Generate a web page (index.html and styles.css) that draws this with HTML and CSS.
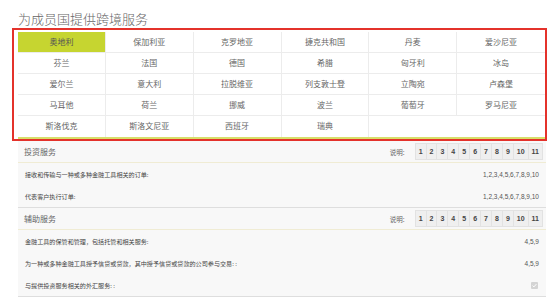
FILE: index.html
```html
<!DOCTYPE html>
<html lang="zh">
<head>
<meta charset="utf-8">
<link rel="stylesheet" href="styles.css">
</head>
<body>
<div class="page">
  <h1 class="title">为成员国提供跨境服务</h1>
  <div class="highlight">
    <div class="grid">
      <div class="cell active">奥地利</div>
      <div class="cell">保加利亚</div>
      <div class="cell">克罗地亚</div>
      <div class="cell">捷克共和国</div>
      <div class="cell">丹麦</div>
      <div class="cell">爱沙尼亚</div>
      <div class="cell">芬兰</div>
      <div class="cell">法国</div>
      <div class="cell">德国</div>
      <div class="cell">希腊</div>
      <div class="cell">匈牙利</div>
      <div class="cell">冰岛</div>
      <div class="cell">爱尔兰</div>
      <div class="cell">意大利</div>
      <div class="cell">拉脱维亚</div>
      <div class="cell">列支敦士登</div>
      <div class="cell">立陶宛</div>
      <div class="cell">卢森堡</div>
      <div class="cell">马耳他</div>
      <div class="cell">荷兰</div>
      <div class="cell">挪威</div>
      <div class="cell">波兰</div>
      <div class="cell">葡萄牙</div>
      <div class="cell">罗马尼亚</div>
      <div class="cell">斯洛伐克</div>
      <div class="cell">斯洛文尼亚</div>
      <div class="cell">西班牙</div>
      <div class="cell">瑞典</div>
      <div class="cell empty"></div>
      <div class="cell empty"></div>
    </div>
  </div>

  <div class="section">
    <div class="sec-head">
      <span class="sec-title">投资服务</span>
      <div class="legend">
        <span class="legend-label">说明:</span>
        <div class="nums">
          <span class="num">1</span><span class="num">2</span><span class="num">3</span><span class="num">4</span><span class="num">5</span><span class="num">6</span><span class="num">7</span><span class="num">8</span><span class="num">9</span><span class="num">10</span><span class="num">11</span>
        </div>
      </div>
    </div>
    <div class="row"><span>接收和传输与一种或多种金融工具相关的订单:</span><span class="val">1,2,3,4,5,6,7,8,9,10</span></div>
    <div class="row"><span>代表客户执行订单:</span><span class="val">1,2,3,4,5,6,7,8,9,10</span></div>
  </div>

  <div class="section">
    <div class="sec-head">
      <span class="sec-title">辅助服务</span>
      <div class="legend">
        <span class="legend-label">说明:</span>
        <div class="nums">
          <span class="num">1</span><span class="num">2</span><span class="num">3</span><span class="num">4</span><span class="num">5</span><span class="num">6</span><span class="num">7</span><span class="num">8</span><span class="num">9</span><span class="num">10</span><span class="num">11</span>
        </div>
      </div>
    </div>
    <div class="row"><span>金融工具的保管和管理，包括托管和相关服务:</span><span class="val">4,5,9</span></div>
    <div class="row"><span>为一种或多种金融工具授予信贷或贷款，其中授予信贷或贷款的公司参与交易: :</span><span class="val">4,5,9</span></div>
    <div class="row"><span>与提供投资服务相关的外汇服务: :</span>
      <svg class="check" width="7" height="7" viewBox="0 0 7 7"><rect x="0" y="0" width="7" height="7" rx="1" fill="#d4d4d4"/><path d="M1.6 3.6 L2.9 4.9 L5.4 2.1" stroke="#fff" stroke-width="1" fill="none"/></svg>
    </div>
  </div>
</div>
</body>
</html>
```

FILE: styles.css
```css
* { box-sizing: border-box; }
html, body { margin: 0; padding: 0; background: #fff; }
body {
  font-family: "Noto Sans CJK SC", "Noto Sans", sans-serif;
  color: #444;
}
.page {
  padding: 10px 0 0 12px;
  width: 547px;
}
.title {
  margin: 0 0 1px 6px;
  font-size: 13px;
  line-height: 17px;
  font-weight: 300;
  color: #666;
}
.highlight {
  border: 2px solid #e4322b;
  padding: 2px 0 0 4px;
  width: 535px;
}
.grid {
  display: grid;
  grid-template-columns: repeat(6, 1fr);
  border-bottom: 2px solid #d8df6a;
}
.cell {
  height: 21px;
  line-height: 20px;
  text-align: center;
  font-size: 8px;
  color: #666;
  border-right: 1px solid #ececec;
  border-bottom: 1px solid #ececec;
  background: #fff;
}
.cell:nth-child(6n) { border-right: none; }
.cell:nth-child(n+25) { border-bottom: none; }
.cell.empty { border-right: none; }
.cell.active {
  background: #c6d530;
  color: #555;
}
.section {
  margin-left: 6px;
  width: 528px;
  background: #f8f8f8;
  border-bottom: 1px solid #dedede;
}
.sec-head {
  display: flex;
  justify-content: space-between;
  align-items: center;
  height: 22px;
  padding: 0 3px 0 6px;
  border-bottom: 1px solid #f0ecd4;
}
.sec-title {
  font-size: 8px;
  color: #666;
}
.legend {
  display: flex;
  align-items: center;
}
.legend-label {
  font-size: 6.5px;
  color: #666;
  margin-right: 10px;
}
.nums {
  display: flex;
  border: 1px solid #e2e2e2;
  background: #efefef;
}
.num {
  height: 15px;
  line-height: 15px;
  padding: 0 3px;
  font-size: 7px;
  font-weight: bold;
  color: #444;
  font-family: "Liberation Sans", sans-serif;
  border-left: 1px solid #e2e2e2;
}
.num:first-child { border-left: none; }
.row {
  display: flex;
  justify-content: space-between;
  align-items: center;
  height: 22px;
  padding: 0 7px 0 7px;
  font-size: 6.1px;
  color: #444;
}
.val {
  font-family: "Liberation Sans", sans-serif;
  font-size: 6.5px;
  color: #555;
}
.check { margin-right: 1px; }
```
